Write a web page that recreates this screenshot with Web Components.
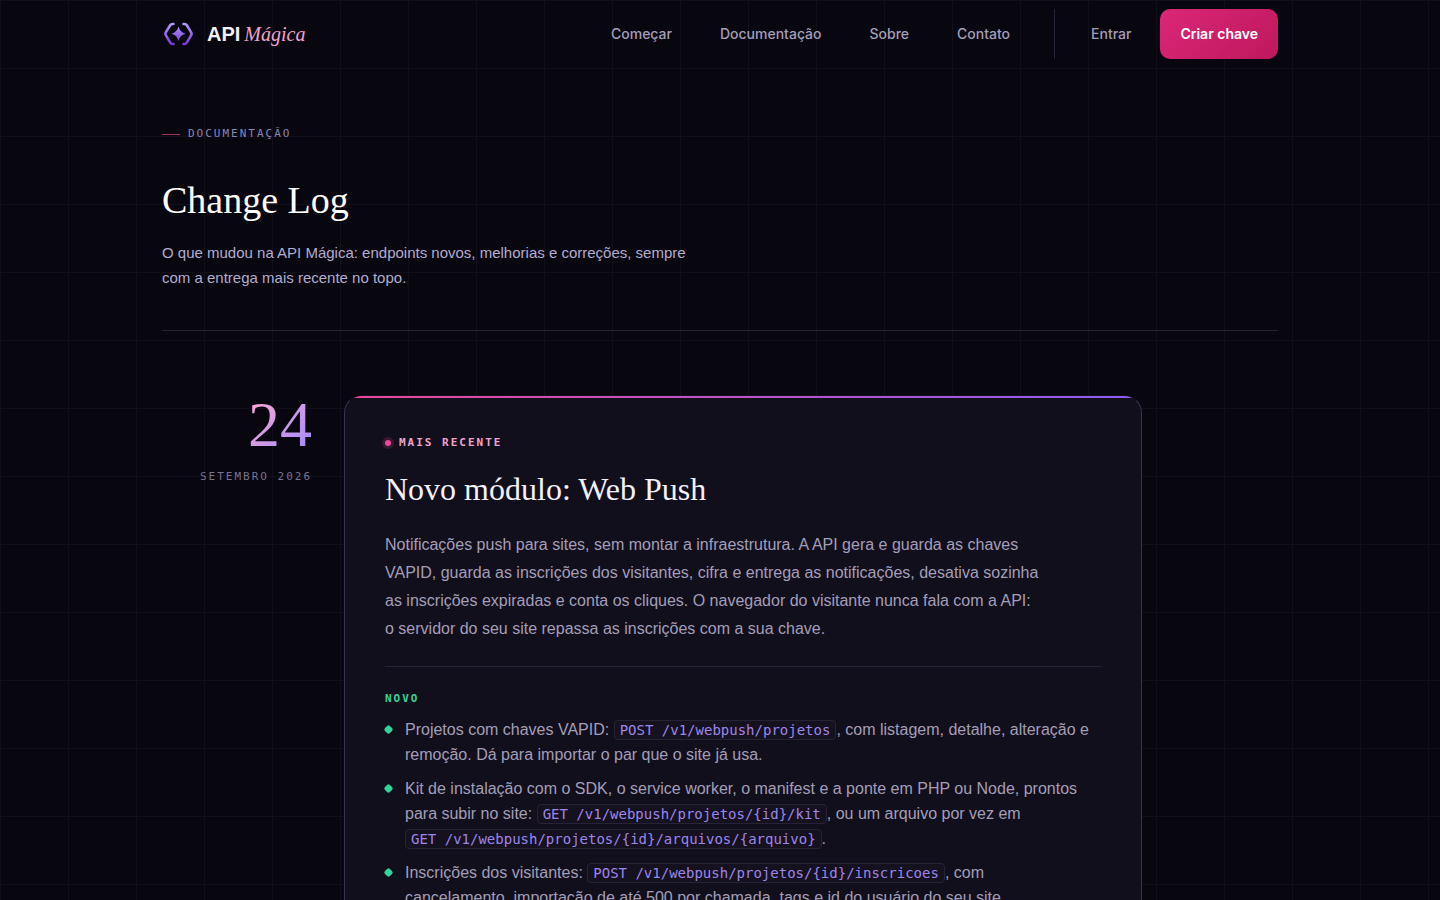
<!DOCTYPE html>
<html lang="pt-BR">
<head>
<meta charset="utf-8">
<meta name="viewport" content="width=device-width, initial-scale=1">
<title>Change Log | API Mágica</title>
<style>
  :root {
    --bg: #08060f;
    --card: #120f1c;
    --line: #272336;
    --text: #a39eb8;
    --lilac: #b3acd0;
    --muted: #77718f;
    --violet: #9d86ec;
    --pink: #f0a3cc;
    --green: #34d399;
    --sans: "Liberation Sans", Arial, sans-serif;
    --ui: Inter, "Liberation Sans", sans-serif;
    --serif: "Liberation Serif", "Times New Roman", serif;
    --mono: "DejaVu Sans Mono", "Liberation Mono", monospace;
  }
  body {
    margin: 0;
    color: var(--text);
    font-family: var(--sans);
    background:
      linear-gradient(#110f19 1px, transparent 1px) 0 0 / 68px 68px,
      linear-gradient(90deg, #110f19 1px, transparent 1px) 0 0 / 68px 68px,
      var(--bg);
  }
</style>
</head>
<body>
<site-header></site-header>
<main>
  <page-intro>
    <span slot="eyebrow">DOCUMENTAÇÃO</span>
    <span slot="title">Change Log</span>
    O que mudou na API Mágica: endpoints novos, melhorias e correções, sempre com a entrega mais recente no topo.
  </page-intro>
  <log-entry>
    <span slot="day">24</span>
    <span slot="month">SETEMBRO 2026</span>
    <span slot="flag">MAIS RECENTE</span>
    <span slot="title">Novo módulo: Web Push</span>
    <span slot="summary">Notificações push para sites, sem montar a infraestrutura. A API gera e guarda as chaves VAPID, guarda as inscrições dos visitantes, cifra e entrega as notificações, desativa sozinha as inscrições expiradas e conta os cliques. O navegador do visitante nunca fala com a API: o&nbsp;servidor do seu site repassa as inscrições com a sua chave.</span>
    <change-list>
      <span slot="label">NOVO</span>
      <change-item>Projetos com chaves VAPID: <api-route>POST /v1/webpush/projetos</api-route>, com listagem, detalhe, alteração e remoção. Dá para importar o par que o site já usa.</change-item>
      <change-item>Kit de instalação com o SDK, o service worker, o manifest e a ponte em PHP ou Node, prontos para subir no site: <api-route>GET /v1/webpush/projetos/{id}/kit</api-route>, ou um arquivo por vez em <api-route>GET /v1/webpush/projetos/{id}/arquivos/{arquivo}</api-route>.</change-item>
      <change-item>Inscrições dos visitantes: <api-route>POST /v1/webpush/projetos/{id}/inscricoes</api-route>, com cancelamento,&nbsp;importação de até 500 por chamada, tags e id do usuário do seu site.</change-item>
    </change-list>
  </log-entry>
</main>

<script>
const define = (name, html) => {
  const template = document.createElement('template');
  template.innerHTML = html;
  customElements.define(name, class extends HTMLElement {
    constructor() {
      super();
      this.attachShadow({ mode: 'open' }).append(template.content.cloneNode(true));
    }
  });
};

define('brand-logo', `
<style>
  :host { display: block; }
  a { display: flex; align-items: center; gap: 13px; color: #f3f0fb; text-decoration: none; }
  svg { display: block; width: 32px; height: 26px; }
  .name { display: flex; align-items: baseline; gap: 4px; font: 700 20px/26px var(--sans); }
  em { font: italic 400 20px/26px var(--serif); color: var(--pink); }
</style>
<a href="#" aria-label="API Mágica">
  <svg viewBox="-1 0 32 26" fill="none" aria-hidden="true">
    <defs><linearGradient id="g" x1="0" y1="0" x2="0" y2="26" gradientUnits="userSpaceOnUse"><stop stop-color="#b9a5fb"/><stop offset="1" stop-color="#6d28d9"/></linearGradient></defs>
    <path d="M10.500 3H9.500Q8 3 7.200 4.300L2.800 11.400Q2 12.800 2.800 14.200L7.200 21.700Q8 23 9.500 23H10.500M20.500 3h1Q23 3 23.800 4.300L28.200 11.400Q29 12.800 28.200 14.200L23.800 21.700Q23 23 21.500 23H20.500" stroke="url(#g)" stroke-width="2.600" stroke-linecap="round" stroke-linejoin="round"/>
    <path d="M15.500 5.500Q16.900 11.300 22.500 12.700 16.900 14.100 15.500 19.900 14.100 14.100 8.500 12.700 14.100 11.300 15.500 5.500Z" fill="url(#g)"/>
  </svg>
  <span class="name">API <em>Mágica</em></span>
</a>`);

define('site-header', `
<style>
  :host { display: block; }
  header { box-sizing: border-box; max-width: 1180px; min-height: 68px; margin: 0 auto; padding: 9px 32px; display: flex; align-items: center; justify-content: space-between; }
  nav, .account { display: flex; align-items: center; }
  nav { gap: 44px; }
  ul { display: flex; gap: 48px; margin: 0; padding: 0; list-style: none; }
  a { color: var(--text); text-decoration: none; font: 500 14px/20px var(--ui); }
  .account { gap: 29px; padding-left: 36px; border-left: 1px solid var(--line); }
  button { height: 50px; padding: 0 20px; border: 0; border-radius: 10px; background: linear-gradient(135deg, #db2777, #be185d); color: #fff; font: 600 14px/20px var(--ui); cursor: pointer; }
</style>
<header>
  <brand-logo></brand-logo>
  <nav>
    <ul>
      <li><a href="#">Começar</a></li>
      <li><a href="#">Documentação</a></li>
      <li><a href="#">Sobre</a></li>
      <li><a href="#">Contato</a></li>
    </ul>
    <div class="account">
      <a href="#">Entrar</a>
      <button type="button">Criar chave</button>
    </div>
  </nav>
</header>`);

define('page-intro', `
<style>
  :host { display: block; box-sizing: border-box; max-width: 1180px; margin: 0 auto; padding: 56px 32px 0; }
  .eyebrow { display: flex; align-items: center; gap: 8px; margin: 0; font: 11px/20px var(--mono); letter-spacing: 2px; color: #8b83b8; }
  .eyebrow::before { content: ""; width: 18px; height: 1px; background: #a8305f; }
  h1 { margin: 32px 0 0; font: 400 38px/48px var(--serif); color: #fff; }
  p.lead { max-width: 544px; margin: 16px 0 0; font-size: 15px; line-height: 25px; color: var(--lilac); }
  hr { height: 1px; margin: 40px 0 0; border: 0; background: var(--line); }
</style>
<p class="eyebrow"><slot name="eyebrow"></slot></p>
<h1><slot name="title"></slot></h1>
<p class="lead"><slot></slot></p>
<hr>`);

define('log-entry', `
<style>
  :host { display: block; box-sizing: border-box; max-width: 1180px; margin: 0 auto; padding: 64px 32px; }
  .row { display: grid; grid-template-columns: 150px minmax(0, 1fr); gap: 32px; max-width: 980px; }
  .date { text-align: right; }
  .day { display: inline-block; font: 400 64px/60px var(--serif); color: transparent; background: linear-gradient(135deg, #f9a8d4 10%, #a78bfa 90%); background-clip: text; -webkit-background-clip: text; }
  .month { margin-top: 14px; font: 11px/16px var(--mono); letter-spacing: 2px; white-space: nowrap; color: var(--muted); }
  article { position: relative; overflow: hidden; padding: 37px 40px 40px; border: 1px solid #3a3159; border-top-color: transparent; border-radius: 18px; background: var(--card); }
  article::before { content: ""; position: absolute; inset: -1px -1px auto; height: 3px; background: linear-gradient(90deg, #ec4899, #8b5cf6); }
  .flag { display: flex; align-items: center; gap: 8px; margin: 0; font: 700 11px/20px var(--mono); letter-spacing: 2px; color: var(--pink); }
  .flag::before { content: ""; width: 6px; height: 6px; border-radius: 50%; background: #ec4899; box-shadow: 0 0 0 3px #3a1730; }
  h2 { margin: 16px 0 0; font: 400 32px/40px var(--serif); color: #f3f0fb; }
  .summary { max-width: 670px; margin: 22px 0 23px; font-size: 16px; line-height: 28px; }
  hr { height: 1px; margin: 0; border: 0; background: var(--line); }
</style>
<div class="row">
  <div class="date">
    <div class="day"><slot name="day"></slot></div>
    <div class="month"><slot name="month"></slot></div>
  </div>
  <article>
    <p class="flag"><slot name="flag"></slot></p>
    <h2><slot name="title"></slot></h2>
    <p class="summary"><slot name="summary"></slot></p>
    <hr>
    <slot></slot>
  </article>
</div>`);

define('change-list', `
<style>
  :host { display: block; padding-top: 22px; }
  h3 { margin: 0 0 8px; font: 700 11px/20px var(--mono); letter-spacing: 2px; color: var(--green); }
  .items { display: grid; gap: 9px; }
</style>
<h3><slot name="label"></slot></h3>
<div class="items" role="list"><slot></slot></div>`);

define('change-item', `
<style>
  :host { display: grid; grid-template-columns: 7px minmax(0, 1fr); gap: 13px; font-size: 16px; line-height: 25px; }
  i { width: 7px; height: 7px; margin-top: 9px; border-radius: 2px; background: var(--green); transform: rotate(45deg); }
</style>
<i></i><div role="listitem"><slot></slot></div>`);

define('api-route', `
<style>
  :host { display: inline; }
  code { padding: 1px 5px; border: 1px solid var(--line); border-radius: 4px; background: #15111f; color: var(--violet); font: 14px/1 var(--mono); white-space: nowrap; }
</style><code><slot></slot></code>`);
</script>
</body>
</html>
